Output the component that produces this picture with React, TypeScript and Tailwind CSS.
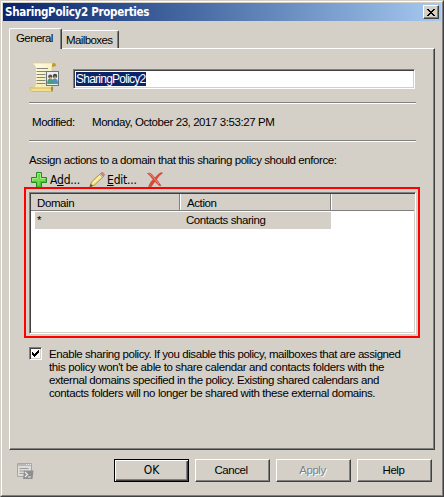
import React from "react";

const raised = "border border-t-white border-l-white border-r-[#404040] border-b-[#404040] shadow-[inset_-1px_-1px_0_#808080]";
const sunken = "border border-t-[#808080] border-l-[#808080] border-r-white border-b-white shadow-[inset_1px_1px_0_#404040,inset_-1px_-1px_0_#d4d0c8]";

function PolicyIcon() {
  return (
    <svg width="31" height="31" viewBox="0 0 31 31" className="block">
      <defs>
        <linearGradient id="paper" x1="0" x2="1" y2="1">
          <stop stopColor="#fffde8" />
          <stop offset="1" stopColor="#f3e59c" />
        </linearGradient>
      </defs>
      <path d="M5 1h20q3 0 2.500 3H23v22H4.500q2-1 2-5V6Q6.500 3 3.500 2z" fill="url(#paper)" stroke="#dccb83" strokeWidth=".7" />
      <path d="M23 5V2q0-1 2-1t2 3z" fill="#b89d3e" />
      <path d="M1 25.500q2 1 4 .5h17q0 3 2 3.500H3q-2-.5-2-4z" fill="#f1df8c" stroke="#c2a84c" strokeWidth=".6" />
      <path d="M22 25v3q1 1.500 2 .5v-4z" fill="#a58a34" />
      <path d="M7.500 6.500H19M7.500 9.500H19M7.500 12.500h9M7.500 15.500h9M7.500 18.500h9M7.500 21.500h9" stroke="#85877c" />
      <rect x="17.500" y="9.500" width="12" height="14" fill="#e4f2f8" stroke="#66777d" />
      <path d="M18.500 22v-2q0-3 3-3.500l2 1 1.500-1q4 0 4 4V22z" fill="#4c93b8" />
      <path d="M18.500 22v-2q0-3 2.500-3.500l3 4V22z" fill="#4d9b78" />
      <circle cx="21.300" cy="14.500" r="2.100" fill="#694d3b" />
      <circle cx="26" cy="14" r="2.200" fill="#4e4540" />
      <path d="M20.500 15h2v2h-1.500zM25 14.500h2.200l-.5 2.500h-1z" fill="#d5a37d" />
    </svg>
  );
}

function AddIcon() {
  return (
    <svg width="16" height="16" viewBox="0 0 16 16">
      <path d="M5.500.5h5v5h5v5h-5v5h-5v-5h-5v-5h5z" fill="#48c832" stroke="#258b20" />
      <path d="M6.500 1.500h3v5h5M1.500 9V6.500h5v-5" fill="none" stroke="#a5ed83" />
      <path d="M7.500 2v11M2 8h12" stroke="#71df50" strokeWidth="2" />
    </svg>
  );
}

function PencilIcon() {
  return (
    <svg width="16" height="16" viewBox="0 0 16 16">
      <path d="M1 14.500 2.500 10 11 2l3 3-8.500 8z" fill="#f7df83" stroke="#9d813a" strokeWidth=".8" />
      <path d="m4 11 8-7.500" stroke="#fff5b5" strokeWidth="1.300" />
      <path d="m10.500 2.500 3 3 1-1-3-3z" fill="#cfd0cd" stroke="#858581" strokeWidth=".5" />
      <path d="m11.500 1.500 1-1q2-.5 3 2l-1 2z" fill="#dc8777" stroke="#a75e54" strokeWidth=".5" />
      <path d="m.5 15 1.200-3.300L4 14z" fill="#5d5137" />
    </svg>
  );
}

function DeleteIcon() {
  return (
    <svg width="16" height="15" viewBox="0 0 16 15">
      <path d="M.5 1.500Q3 .3 4.500 2L8 6q3-4.500 6.500-5.500l1 .6Q12 3.500 9.500 7.500l4.500 6-1 .5q-2-1-5-4.500-2.500 3-3.500 5H1.500q2-5 4.500-7Q4 4 .5 1.500z" fill="#d94a37" stroke="#ba3a2c" strokeWidth=".5" />
      <path d="M2 1.800q2 0 3.500 2.500L8 7.500 12 12" stroke="#ef8d79" fill="none" />
    </svg>
  );
}

function ScriptIcon() {
  return (
    <svg width="17" height="17" viewBox="0 0 17 17">
      <path d="M.5.5h14v13H.5z" fill="#dedcd8" stroke="#a7a7a6" />
      <path d="M1 1h13v2H1z" fill="#b7b7b6" />
      <path d="M9 1.500h1M11 1.500h1M13 1.500h1" stroke="#eee" />
      <path d="M2.500 5.500h9M2.500 8h5M2.500 10.500h4" stroke="#9c9c9b" />
      <path d="M7 7.500h9.500l-1 8.500H6z" fill="#8d8e8e" />
      <path d="m8 9 2.500 2.500L8 14m3 0h3" fill="none" stroke="#eee" strokeWidth="1.200" />
    </svg>
  );
}

function Separator() {
  return <div className="h-[2px] w-[387px] shrink-0 border-t border-b border-t-[#808080] border-b-white" />;
}

export default function App() {
  return (
    <div className="h-[497px] w-[444px] overflow-hidden bg-[#d4d0c8] font-['Liberation_Sans',Arial,sans-serif] text-[11.5px] leading-[13px] tracking-[-0.43px] whitespace-nowrap text-black">
      <div className="relative flex h-full flex-col border border-t-[#d4d0c8] border-l-[#d4d0c8] border-r-[#404040] border-b-[#404040] px-[2px] pt-[2px]">
        <div className="pointer-events-none absolute inset-0 border border-t-white border-l-white border-r-[#808080] border-b-[#808080]" />
        <div className="flex h-[18px] shrink-0 items-center justify-between bg-linear-to-r from-[#0a246a] to-[#a6caf0] pr-[2px] pl-[2px]">
          <span className="font-['DejaVu_Sans_Condensed','DejaVu_Sans',sans-serif] text-[11.5px] font-bold tracking-[-0.3px] text-white">SharingPolicy2 Properties</span>
          <button className={`flex h-[14px] w-[16px] items-center justify-center bg-[#d4d0c8] ${raised}`}>
            <svg width="8" height="7" viewBox="0 0 8 7" shapeRendering="crispEdges">
              <path d="M0 0h2v1h1v1h2V1h1V0h2v1H7v1H6v1H5v1h1v1h1v1h1v1H6V6H5V5H3v1H2v1H0V6h1V5h1V4h1V3H2V2H1V1H0z" />
            </svg>
          </button>
        </div>

        <div className="mt-[7px] ml-[6px] flex h-[20px] shrink-0 items-end">
          <div className="relative z-10 -mb-px flex h-[21px] w-[53px] rounded-t-[2px] border-t border-l border-r border-white border-r-[#404040] bg-[#d4d0c8] pt-[3px] pl-[6px] tracking-[-0.6px] shadow-[inset_-1px_0_0_#808080]">General</div>
          <div className="flex h-[18px] w-[57px] rounded-t-[2px] border-t border-r border-white border-r-[#404040] pt-[3px] pl-[4px] tracking-[-0.6px] shadow-[inset_-1px_0_0_#808080]">Mailboxes</div>
        </div>

        <div className={`ml-[6px] flex h-[402px] w-[426px] shrink-0 flex-col pl-[14px] ${raised}`}>
          <div className="ml-[5px] flex h-[53px] shrink-0 pt-[13px]">
            <PolicyIcon />
            <div className={`mt-[7px] ml-[13px] flex h-[20px] w-[342px] bg-white pt-[2px] pl-[2px] ${sunken}`}>
              <span className="h-[14px] bg-[#0a246a] text-[12px] leading-[15px] tracking-[-0.75px] text-white">SharingPolicy2</span>
            </div>
          </div>
          <div className="ml-[5px] flex shrink-0 flex-col">
            <Separator />
            <div className="flex h-[36px] items-center pl-[3px]">
              <span className="w-[60px]">Modified:</span>
              <span>Monday, October 23, 2017 3:53:27 PM</span>
            </div>
            <Separator />
            <div className="h-[30px] pt-[12px]">Assign actions to a domain that this sharing policy should enforce:</div>
            <div className="flex h-[15px] pl-[2px] font-['DejaVu_Sans_Condensed','DejaVu_Sans',sans-serif] text-[12px] leading-[17px] tracking-[-0.2px]">
              <span className="w-[19px]"><AddIcon /></span>
              <span className="w-[39px]">A<span className="underline">d</span>d...</span>
              <span className="w-[18px]"><PencilIcon /></span>
              <span className="w-[40px]"><span className="underline">E</span>dit...</span>
              <DeleteIcon />
            </div>
          </div>

          <div className="z-10 h-[151px] w-[396px] shrink-0 border-2 border-[#ff0000] pt-[3px] pl-[3px]">
            <div className={`flex h-[142px] w-[387px] flex-col bg-white p-px ${sunken}`}>
              <div className="flex h-[17px] shrink-0 border-b border-[#808080] bg-[#d4d0c8] leading-[18px] tracking-[-0.4px]">
                <div className="w-[149px] border-r border-[#808080] pl-[6px]">Domain</div>
                <div className="w-[151px] border-r border-l border-l-white border-r-[#808080] pl-[6px]">Action</div>
                <div className="grow border-l border-white" />
              </div>
              <div className="mt-px ml-[4px] flex h-[17px] w-[296px] bg-[#d4d0c8] leading-[17px]">
                <div className="w-[151px] pl-[2px]">*</div>
                <div>Contacts sharing</div>
              </div>
            </div>
          </div>

          <div className="mt-[9px] ml-[5px] flex">
            <div className={`flex h-[13px] w-[13px] items-center justify-center bg-white ${sunken}`}>
              <svg width="7" height="7" viewBox="0 0 7 7" shapeRendering="crispEdges">
                <path d="M0 2h1v1h1v1h1V3h1V2h1V1h1V0h1v3H6v1H5v1H4v1H3v1H2V6H1V5H0z" />
              </svg>
            </div>
            <div className="mt-px ml-[7px]">
              <div>Enable sharing policy. If you disable this policy, mailboxes that are assigned</div>
              <div className="tracking-[-0.37px]">this policy won't be able to share calendar and contacts folders with the</div>
              <div className="tracking-[-0.42px]">external domains specified in the policy. Existing shared calendars and</div>
              <div className="tracking-[-0.4px]">contacts folders will no longer be shared with these external domains.</div>
            </div>
          </div>
        </div>

        <div className="mt-[9px] ml-[14px] flex">
          <div className="w-[97px] pt-[4px]"><ScriptIcon /></div>
          <div className="flex gap-[6px]">
            <button className="h-[23px] w-[75px] border border-black font-['DejaVu_Sans_Condensed','DejaVu_Sans',sans-serif] text-[12px] tracking-normal shadow-[inset_1px_1px_0_white,inset_-1px_-1px_0_#404040,inset_-2px_-2px_0_#808080]">OK</button>
            <button className={`h-[23px] w-[75px] pr-[3px] ${raised}`}>Cancel</button>
            <button className={`h-[23px] w-[75px] pr-[2px] text-[#808080] [text-shadow:1px_1px_0_white] ${raised}`}>Apply</button>
            <button className={`h-[23px] w-[75px] pr-[2px] ${raised}`}>Help</button>
          </div>
        </div>
      </div>
    </div>
  );
}
